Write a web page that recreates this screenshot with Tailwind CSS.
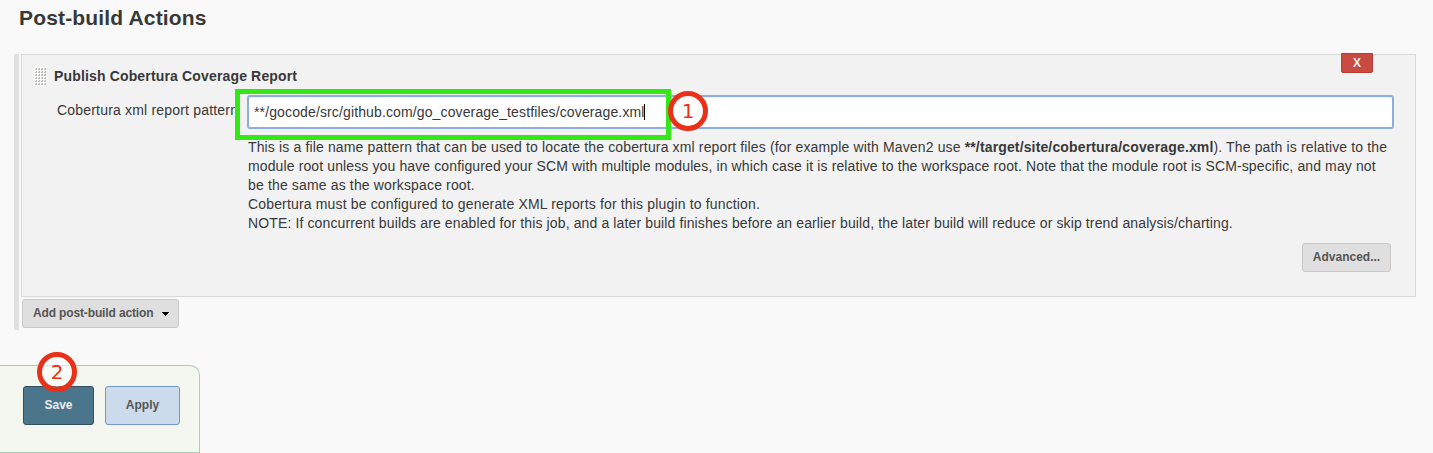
<!DOCTYPE html>
<html lang="en">
<head>
<meta charset="utf-8">
<title>Post-build Actions</title>
<script src="https://cdn.jsdelivr.net/npm/@tailwindcss/browser@4"></script>
</head>
<body class="flex h-[453px] w-[1433px] flex-col overflow-hidden bg-[#f9f9f9] font-['Liberation_Sans',Arial,sans-serif] text-[14px] leading-[19px] text-[#383838]">
<h1 class="h-[54px] pt-[5px] pl-[19px] text-[21px] leading-[26px] font-bold tracking-[0.16px]">Post-build Actions</h1>
<main class="ml-[14px] h-[276px] w-[1402px] border-l-5 border-[#e0e0e0] pl-[2px]">
  <section class="relative flex h-[243px] flex-col border border-[#d9d9d9] bg-[#f2f2f2] pt-[12px]">
    <button class="absolute -top-[2px] left-[1319px] h-[20px] w-[32px] rounded-b-[2px] border border-[#b73d36] bg-[#c94a41] text-center text-[12px] leading-[18px] font-bold text-[#eee]">X</button>
    <div class="flex items-center gap-[7px] pl-[12px]">
      <svg class="h-[19px] w-[13px]" viewBox="0 0 13 19" shape-rendering="crispEdges">
        <defs><pattern id="grip" x="1" y="1" width="3" height="3" patternUnits="userSpaceOnUse"><path d="M1 0h1v2H0V1h1z" fill="#bcbcb6"/><path d="M0 0h1v1H0z" fill="#e2e2de"/></pattern></defs>
        <path d="M0 0h13v19H0z" fill="#fff"/><path d="M1 1h12v17H1z" fill="url(#grip)"/>
      </svg>
      <h2 class="font-bold tracking-[0.155px]">Publish Cobertura Coverage Report</h2>
    </div>
    <div class="mt-[9px] flex pl-[35px]">
      <label class="w-[190px] whitespace-nowrap pt-[6px] tracking-[0.19px]">Cobertura xml report pattern</label>
      <div class="relative flex h-[34px] w-[1147px] items-center rounded-[3px] border-2 border-[#8caede] bg-white pl-[5px] shadow-[inset_0_1px_1px_#0001]">
        <span class="tracking-[0.13px]">**/gocode/src/github.com/go_coverage_testfiles/coverage.xml</span><span class="-ml-px h-[16px] w-px bg-black"></span>
        <div class="absolute -top-[8px] -left-[14px] h-[51px] w-[436px] border-5 border-[#34e817]"></div>
        <div class="absolute -top-[6px] left-[419px] flex size-[40px] items-center justify-center rounded-full border-5 border-[#e93119] bg-white font-['DejaVu_Sans',sans-serif] text-[20px] text-[#e93119]">1</div>
      </div>
    </div>
    <div class="mt-[9px] ml-[226px] whitespace-nowrap">
      <p class="tracking-[0.142px]">This is a file name pattern that can be used to locate the cobertura xml report files (for example with Maven2 use <b>**/target/site/cobertura/coverage.xml</b>). The path is relative to the</p>
      <p class="tracking-[0.12px]">module root unless you have configured your SCM with multiple modules, in which case it is relative to the workspace root. Note that the module root is SCM-specific, and may not</p>
      <p class="tracking-[0.15px]">be the same as the workspace root.</p>
      <p class="tracking-[0.16px]">Cobertura must be configured to generate XML reports for this plugin to function.</p>
      <p class="tracking-[0.125px]">NOTE: If concurrent builds are enabled for this job, and a later build finishes before an earlier build, the later build will reduce or skip trend analysis/charting.</p>
    </div>
    <button class="mt-[10px] ml-[1280px] h-[29px] w-[89px] rounded-[3px] border border-[#c9c9c9] bg-[#dfdfdf] text-[12px] leading-[27px] font-bold text-[#555]">Advanced...</button>
  </section>
  <button class="mt-[2px] ml-px flex h-[29px] w-[157px] items-center rounded-[3px] border border-[#c9c9c9] bg-[#dfdfdf] pl-[10px] text-[12px] font-bold whitespace-nowrap text-[#555]"><span class="w-[129px] text-left tracking-[-0.14px]">Add post-build action</span>
    <svg class="mt-px h-[4px] w-[7px]" viewBox="0 0 7 4" shape-rendering="crispEdges"><path d="M0 0h7v1H6v1H5v1H4v1H3V3H2V2H1V1H0z" fill="#000"/></svg>
  </button>
</main>
<footer class="relative mt-[35px] flex h-[88px] w-[200px] gap-[11px] rounded-tr-[10px] border border-l-0 border-[#abcdb7] bg-[#f4f7ef] pt-[20px] pl-[23px] text-[12px] font-bold">
  <button class="h-[39px] w-[71px] rounded-[3px] border border-[#315163] bg-[#4b758b] text-[#eee]">Save</button>
  <button class="h-[39px] w-[75px] rounded-[3px] border border-[#7396ce] bg-[#ccdbec] text-[#555]">Apply</button>
  <div class="absolute -top-[14px] left-[37px] flex size-[40px] items-center justify-center rounded-full border-5 border-[#e93119] bg-white/50 bg-clip-padding font-['DejaVu_Sans',sans-serif] text-[20px] font-normal text-[#e93119]">2</div>
</footer>
</body>
</html>
